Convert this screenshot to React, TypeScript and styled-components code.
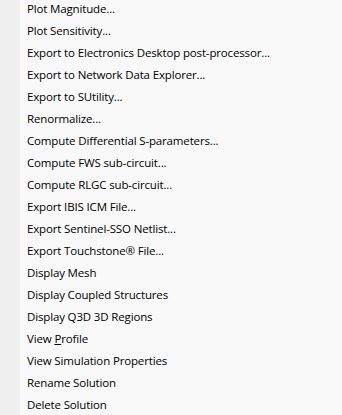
import React from 'react';
import styled, { createGlobalStyle } from 'styled-components';

const GlobalStyle = createGlobalStyle`
  html, body {
    margin: 0;
    padding: 0;
    background: #f9f9f9;
  }
`;

const Menu = styled.div`
  display: flex;
  width: 342px;
  height: 415px;
  overflow: hidden;
  background: #f9f9f9;
  font-family: 'Open Sans', 'Noto Sans', Arial, sans-serif;
  font-size: 11.5px;
  letter-spacing: -0.15px;
  color: #000;
`;

const Gutter = styled.div`
  width: 20px;
  flex: none;
  background: #f0f0f0;
`;

const List = styled.ul`
  list-style: none;
  margin: -3px 0 0;
  padding: 0;
  flex: 1;
`;

const Item = styled.li`
  display: flex;
  align-items: center;
  height: 22px;
  padding-left: 7px;
  white-space: nowrap;
`;

const Text = styled.span`
  white-space: pre;
`;

const AccessKey = styled.span`
  text-decoration: underline;
`;

type Entry = { label: string; key?: number };

const entries: Entry[] = [
  { label: 'Plot Magnitude...' },
  { label: 'Plot Sensitivity...' },
  { label: 'Export to Electronics Desktop post-processor...' },
  { label: 'Export to Network Data Explorer...' },
  { label: 'Export to SUtility...' },
  { label: 'Renormalize...' },
  { label: 'Compute Differential S-parameters...' },
  { label: 'Compute FWS sub-circuit...' },
  { label: 'Compute RLGC sub-circuit...' },
  { label: 'Export IBIS ICM File...' },
  { label: 'Export Sentinel-SSO Netlist...' },
  { label: 'Export Touchstone\u00ae File...' },
  { label: 'Display Mesh' },
  { label: 'Display Coupled Structures' },
  { label: 'Display Q3D 3D Regions' },
  { label: 'View Profile', key: 5 },
  { label: 'View Simulation Properties' },
  { label: 'Rename Solution' },
  { label: 'Delete Solution' },
];

function Label({ entry }: { entry: Entry }) {
  if (entry.key === undefined) return <Text>{entry.label}</Text>;
  const k = entry.key;
  return (
    <Text>
      {entry.label.slice(0, k)}
      <AccessKey>{entry.label[k]}</AccessKey>
      {entry.label.slice(k + 1)}
    </Text>
  );
}

export default function App() {
  return (
    <>
      <GlobalStyle />
      <Menu>
        <Gutter />
        <List>
          {entries.map((e) => (
            <Item key={e.label}>
              <Label entry={e} />
            </Item>
          ))}
        </List>
      </Menu>
    </>
  );
}
